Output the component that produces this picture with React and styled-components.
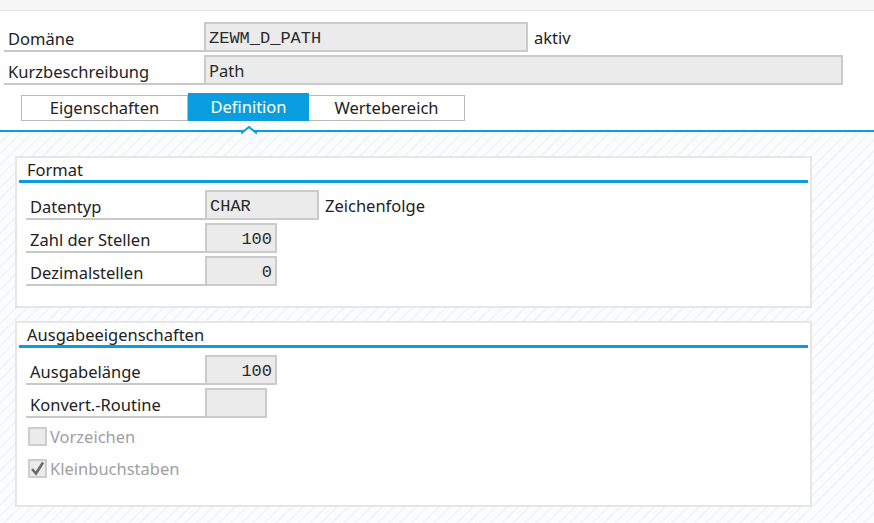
import React from 'react';
import styled, { createGlobalStyle } from 'styled-components';

const Global = createGlobalStyle`
  html, body {
    margin: 0;
    padding: 0;
    background: #fff;
  }
  body {
    font-family: "Noto Sans", "Liberation Sans", sans-serif;
    font-size: 16.5px;
    color: #222;
  }
`;

const BLUE = '#0a9ee0';

const Page = styled.div`
  width: 874px;
  height: 523px;
  overflow: hidden;
  display: flex;
  flex-direction: column;
`;

const TopStrip = styled.div`
  height: 10px;
  background: #f7f7f7;
  border-bottom: 1px solid #e4e4e4;
`;

const Header = styled.div`
  background: #fff;
  padding: 12px 0 0 4px;
  display: flex;
  flex-direction: column;
  gap: 4px;
  border-bottom: 2px solid ${BLUE};
  position: relative;
`;

const Row = styled.div`
  display: flex;
  align-items: stretch;
  height: 29px;
`;

const Label = styled.div`
  width: ${p => p.$w || 200}px;
  box-sizing: border-box;
  padding: 4px 0 0 4px;
  border-bottom: 2px solid #c8c8c8;
  color: #222;
  line-height: 24px;
  white-space: nowrap;
`;

const Field = styled.div`
  width: ${p => p.$w}px;
  height: ${p => p.$h || 30}px;
  box-sizing: border-box;
  background: #ebebeb;
  border: 2px solid #cbcbcb;
  font-family: ${p => (p.$mono ? '"Liberation Mono", monospace' : 'inherit')};
  font-size: ${p => (p.$mono ? '17px' : 'inherit')};
  text-align: ${p => (p.$right ? 'right' : 'left')};
  padding: 0 3px;
  line-height: ${p => (p.$mono ? 29 : 27)}px;
  color: #2a2a2a;
  margin-top: -1px;
  white-space: nowrap;
`;

const After = styled.div`
  padding-left: 6px;
  line-height: 30px;
  color: #222;
`;

const Tabs = styled.div`
  display: flex;
  margin: 4px 0 9px 17px;
  height: 28px;
  align-items: flex-end;
`;

const Tab = styled.div`
  box-sizing: border-box;
  width: ${p => p.$w}px;
  height: ${p => (p.$active ? 28 : 26)}px;
  background: ${p => (p.$active ? BLUE : '#fff')};
  color: ${p => (p.$active ? '#fff' : '#222')};
  border: ${p => (p.$active ? 'none' : '1px solid #b8b8b8')};
  border-left: ${p => (p.$first || p.$active ? undefined : 'none')};
  text-align: center;
  line-height: ${p => (p.$active ? 28 : 24)}px;
  position: relative;
`;

const Notch = styled.svg`
  position: absolute;
  left: 50%;
  bottom: -13px;
  margin-left: -8px;
  width: 16px;
  height: 8px;
`;

const Content = styled.div`
  flex: 1;
  padding: 24px 0 0 15px;
  display: flex;
  flex-direction: column;
  gap: 13px;
  background: repeating-linear-gradient(
    -45deg,
    #fbfcfd 0px,
    #fbfcfd 6px,
    #f3f5f7 6px,
    #f3f5f7 8px
  );
`;

const Panel = styled.div`
  width: 797px;
  height: ${p => p.$h}px;
  box-sizing: border-box;
  background: #fff;
  border: 2px solid #e6e6e6;
  padding: 0 2px;
`;

const PanelTitle = styled.div`
  border-bottom: 3px solid ${BLUE};
  padding: 1px 0 0 8px;
  line-height: 21px;
  color: #222;
`;

const PanelBody = styled.div`
  padding: 8px 0 0 7px;
  display: flex;
  flex-direction: column;
  gap: 4px;
`;

const CheckRow = styled.div`
  display: flex;
  align-items: center;
  gap: 3px;
  height: 20px;
  margin: ${p => (p.$first ? '4px' : '8px')} 0 0 2px;
  color: #a0a0a0;
`;

const Box = styled.div`
  width: 19px;
  height: 19px;
  box-sizing: border-box;
  background: #ebebeb;
  border: 2px solid #cdcdcd;
  display: flex;
  align-items: center;
  justify-content: center;
`;

function Check({ checked, children, first }) {
  return (
    <CheckRow $first={first}>
      <Box>
        {checked && (
          <svg width="15" height="15" viewBox="0 0 15 15">
            <path d="M2 8 L6 12.5 L13 1.5" fill="none" stroke="#6b6b6b" strokeWidth="2.6" strokeLinejoin="miter" />
          </svg>
        )}
      </Box>
      <span>{children}</span>
    </CheckRow>
  );
}

export default function App() {
  return (
    <Page>
      <Global />
      <TopStrip />
      <Header>
        <Row>
          <Label>Domäne</Label>
          <Field $w={324} $mono>ZEWM_D_PATH</Field>
          <After>aktiv</After>
        </Row>
        <Row>
          <Label>Kurzbeschreibung</Label>
          <Field $w={639}>Path</Field>
        </Row>
        <Tabs>
          <Tab $w={167} $first>Eigenschaften</Tab>
          <Tab $w={121} $active>
            Definition
            <Notch viewBox="0 0 16 8">
              <path d="M0 8 L8 1 L16 8 Z" fill="#fff" />
              <path d="M0 7.5 L8 1 L16 7.5" fill="none" stroke={BLUE} strokeWidth="2" />
            </Notch>
          </Tab>
          <Tab $w={156}>Wertebereich</Tab>
        </Tabs>
      </Header>
      <Content>
        <Panel $h={152}>
          <PanelTitle>Format</PanelTitle>
          <PanelBody>
            <Row>
              <Label $w={179}>Datentyp</Label>
              <Field $w={114} $mono>CHAR</Field>
              <After>Zeichenfolge</After>
            </Row>
            <Row>
              <Label $w={179}>Zahl der Stellen</Label>
              <Field $w={72} $mono $right>100</Field>
            </Row>
            <Row>
              <Label $w={179}>Dezimalstellen</Label>
              <Field $w={72} $mono $right>0</Field>
            </Row>
          </PanelBody>
        </Panel>
        <Panel $h={186}>
          <PanelTitle>Ausgabeeigenschaften</PanelTitle>
          <PanelBody>
            <Row>
              <Label $w={179}>Ausgabelänge</Label>
              <Field $w={72} $mono $right>100</Field>
            </Row>
            <Row>
              <Label $w={179}>Konvert.-Routine</Label>
              <Field $w={62} />
            </Row>
            <Check first>Vorzeichen</Check>
            <Check checked>Kleinbuchstaben</Check>
          </PanelBody>
        </Panel>
      </Content>
    </Page>
  );
}
